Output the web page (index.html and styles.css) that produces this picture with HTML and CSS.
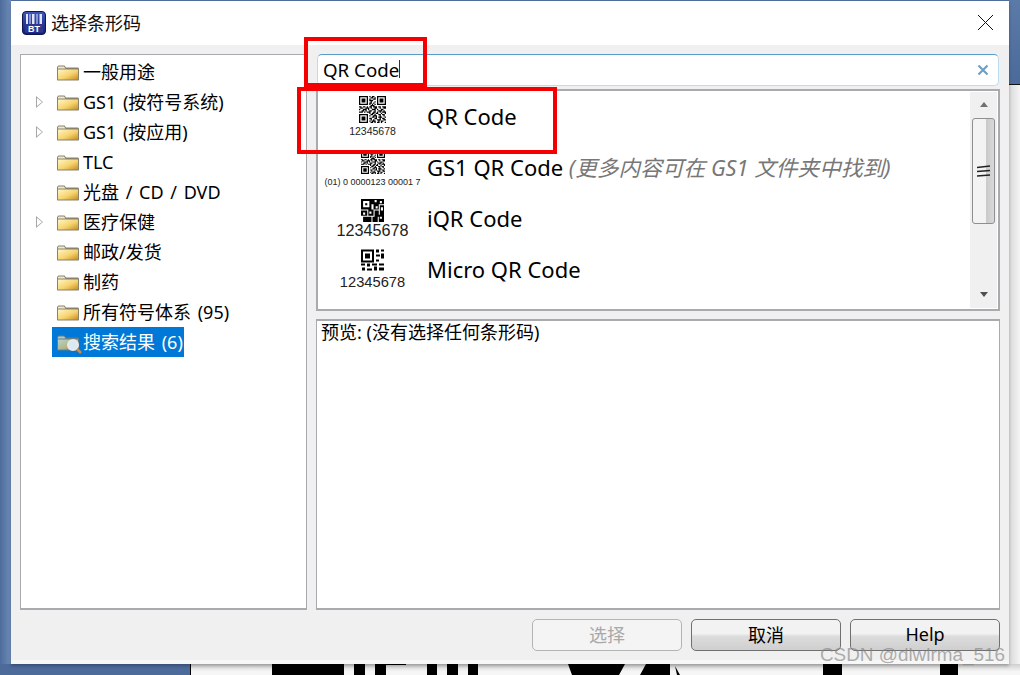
FILE: index.html
```html
<!DOCTYPE html>
<html lang="zh-CN">
<head>
<meta charset="utf-8">
<title>选择条形码</title>
<link rel="stylesheet" href="styles.css">
</head>
<body>
<svg class="defs" width="0" height="0" aria-hidden="true">
  <defs>
    <symbol id="qr" viewBox="0 0 21 21">
      <path fill="none" stroke="#000" d="M.5.5h6v6h-6zM14.5.5h6v6h-6zM.5 14.5h6v6h-6z"/>
      <path d="M2 2h3v3H2zM16 2h3v3h-3zM2 16h3v3H2z"/>
      <path fill="none" stroke="#000" d="M8 .5h1M10 .5h2M9 1.5h2M12 1.5h1M8 2.5h1M11 2.5h2M8 3.5h3M9 4.5h1M12 4.5h1M8 5.5h2M11 5.5h1M8 6.5h1M10 6.5h1M12 6.5h1M9 7.5h3M0 8.5h2M3 8.5h2M6 8.5h1M8 8.5h2M11 8.5h3M15 8.5h2M18 8.5h3M1 9.5h2M5 9.5h3M9 9.5h1M12 9.5h2M16 9.5h1M19 9.5h2M0 10.5h1M3 10.5h3M7 10.5h1M10 10.5h3M14 10.5h1M17 10.5h2M2 11.5h2M5 11.5h1M8 11.5h2M12 11.5h1M15 11.5h3M19 11.5h1M0 12.5h3M4 12.5h1M6 12.5h3M11 12.5h2M14 12.5h1M16 12.5h1M18 12.5h3M8 13.5h1M10 13.5h2M13 13.5h2M17 13.5h1M20 13.5h1M9 14.5h2M12 14.5h1M15 14.5h2M18 14.5h2M8 15.5h1M11 15.5h3M16 15.5h1M19 15.5h1M10 16.5h2M13 16.5h1M15 16.5h3M20 16.5h1M8 17.5h2M12 17.5h2M16 17.5h1M18 17.5h2M9 18.5h1M11 18.5h1M14 18.5h3M19 18.5h2M8 19.5h1M10 19.5h3M15 19.5h1M17 19.5h2M9 20.5h2M12 20.5h1M14 20.5h2M17 20.5h1M20 20.5h1"/>
    </symbol>
    <symbol id="iqr" viewBox="0 0 22 22">
      <path d="M0 0h10v10H0zM10 0h12v5H10zM12 5h5v5h-5zM18 6h4v9h-4zM0 11h6v5H0zM7 10h5v6H7zM13 11h4v6h-4zM2 17h8v5H2zM11 17h5v5h-5zM17 15h5v7h-5z"/>
      <path fill="#fff" d="M2 2h6v6H2zM13 1h2v2h-2zM18 2h2v2h-2zM19 8h2v3h-2zM2 13h2v2H2zM18 17h2v2h-2zM8 12h2v2H8zM14 7h2v2h-2z"/>
      <path d="M4 4h2v2H4z"/>
    </symbol>
    <symbol id="micro" viewBox="0 0 23 21">
      <path fill="none" stroke="#000" stroke-width="2" d="M1 1h11v11H1z"/>
      <path d="M4 4h5v5H4zM15 0h3v3h-3zM20 0h3v2h-3zM15 5h4v2h-4zM20 4h3v5h-3zM15 10h3v2h-3zM0 14h4v2H0zM6 14h3v3H6zM11 14h5v2h-5zM18 14h5v2h-5zM1 18h3v3H1zM6 19h5v2H6zM13 17h3v4h-3zM18 18h5v3h-5z"/>
    </symbol>
    <symbol id="folder" viewBox="0 0 22 16">
      <path fill="#8a826a" d="M0 2.500 1.500 1h6L9 3h12l1 1v11.500l-.5.5H.5L0 15.500z"/>
      <path fill="#efe9d2" d="M1 4V2.500L2 2h5l1.500 2z"/>
      <path fill="url(#folderFill)" d="M1 5h20v10H1z"/>
      <defs>
        <linearGradient id="folderFill" x1="0" y1="0" x2="1" y2="1">
          <stop offset="0" stop-color="#fff6c4"/>
          <stop offset=".55" stop-color="#f6d36f"/>
          <stop offset="1" stop-color="#c98f1e"/>
        </linearGradient>
      </defs>
    </symbol>
  </defs>
</svg>

<div class="backdrop">
  <div class="edge edge-left"></div>
  <div class="edge edge-right-top"></div>
  <div class="edge edge-right-low"></div>
  <div class="edge edge-bottom-left"></div>
  <div class="edge edge-bottom-right">
    <svg class="ink" width="830" height="11" viewBox="0 0 830 11">
      <path d="M0 0h1v11H0zM82 0h72v11H82zM164 0h11v11h-11zM185 0h11v11h-11zM195 0h21v1h-21zM237 0h10v11h-10zM257 0h11v11h-11zM278 0h10v11h-10zM378 0h57l-6 11h-47zM456 0h24v11h-30zM485 2l5 9h-3zM633 0h19v11h-19zM750 0h18v11h-18z"/>
    </svg>
  </div>
</div>

<main class="dialog">
  <header class="titlebar">
    <svg class="app-icon" width="24" height="24" viewBox="0 0 24 24">
      <defs>
        <linearGradient id="iconBg" x1="0" y1="0" x2="0" y2="1">
          <stop offset="0" stop-color="#3f57b8"/>
          <stop offset="1" stop-color="#141c78"/>
        </linearGradient>
      </defs>
      <rect x=".5" y=".5" width="23" height="23" rx="3.500" fill="url(#iconBg)" stroke="#0f1550"/>
      <path fill="#dfe4f7" d="M4 3h2v10H4zM7.500 3h1v10h-1zM10 3h2.500v10H10zM14.500 3h1v10h-1zM17.500 3h2.500v10h-2.500z"/>
      <rect x="3" y="13" width="18" height="8.500" fill="#2c388f"/>
      <text x="12" y="20.800" class="app-icon-text">BT</text>
    </svg>
    <span class="title">选择条形码</span>
    <svg class="close" width="17" height="17" viewBox="0 0 17 17"><path d="M1 1l15 15M16 1 1 16" stroke="#111" fill="none"/></svg>
  </header>

  <div class="body">
    <div class="panes">
      <nav class="tree">
        <div class="node"><span class="twist"></span><svg class="folder"><use href="#folder"/></svg><span class="label">一般用途</span></div>
        <div class="node"><span class="twist closed"></span><svg class="folder"><use href="#folder"/></svg><span class="label">GS1 (按符号系统)</span></div>
        <div class="node"><span class="twist closed"></span><svg class="folder"><use href="#folder"/></svg><span class="label">GS1 (按应用)</span></div>
        <div class="node"><span class="twist"></span><svg class="folder"><use href="#folder"/></svg><span class="label">TLC</span></div>
        <div class="node"><span class="twist"></span><svg class="folder"><use href="#folder"/></svg><span class="label">光盘 / CD / DVD</span></div>
        <div class="node"><span class="twist closed"></span><svg class="folder"><use href="#folder"/></svg><span class="label">医疗保健</span></div>
        <div class="node"><span class="twist"></span><svg class="folder"><use href="#folder"/></svg><span class="label">邮政/发货</span></div>
        <div class="node"><span class="twist"></span><svg class="folder"><use href="#folder"/></svg><span class="label">制药</span></div>
        <div class="node"><span class="twist"></span><svg class="folder"><use href="#folder"/></svg><span class="label">所有符号体系 (95)</span></div>
        <div class="node selected">
          <span class="twist"></span>
          <span class="search-folder">
            <svg class="folder pale"><use href="#folder"/></svg>
            <svg class="lens" width="16" height="16" viewBox="0 0 16 16"><circle cx="7" cy="7" r="5" fill="#dbe9f5" stroke="#e9e9e9" stroke-width="2"/><path d="M11 11l4 4" stroke="#d98a3a" stroke-width="2.500"/></svg>
          </span>
          <span class="label">搜索结果 (6)</span>
        </div>
      </nav>

      <section class="right">
        <div class="search">
          <span class="query">QR Code</span><span class="caret"></span>
          <svg class="clear" width="12" height="12" viewBox="0 0 12 12"><path d="M1.500 1.500l9 9M10.500 1.500l-9 9" stroke="#6f9fc8" stroke-width="2.200" fill="none"/></svg>
        </div>

        <div class="list">
          <div class="rows">
            <div class="row">
              <div class="sym"><svg class="code c1"><use href="#qr"/></svg><span class="num n1">12345678</span></div>
              <div class="name">QR Code</div>
            </div>
            <div class="row">
              <div class="sym"><svg class="code c2"><use href="#qr"/></svg><span class="num n2">(01) 0 0000123 00001 7</span></div>
              <div class="name with-hint">GS1 QR Code <em class="hint">(更多内容可在 GS1 文件夹中找到)</em></div>
            </div>
            <div class="row">
              <div class="sym"><svg class="code c3"><use href="#iqr"/></svg><span class="num n3">12345678</span></div>
              <div class="name">iQR Code</div>
            </div>
            <div class="row">
              <div class="sym"><svg class="code c4"><use href="#micro"/></svg><span class="num n4">12345678</span></div>
              <div class="name">Micro QR Code</div>
            </div>
            <div class="row">
              <div class="sym"><svg class="code c5"><use href="#qr"/></svg></div>
            </div>
          </div>
          <div class="scrollbar">
            <span class="arrow up"></span>
            <div class="track">
              <div class="thumb">
                <svg class="grip" width="14" height="13" viewBox="0 0 14 13"><path d="M0 2.500 13 1M0 6.500 13 5.500M0 11 13 10" stroke="#222" stroke-width="1.300" fill="none"/></svg>
              </div>
            </div>
            <span class="arrow down"></span>
          </div>
        </div>

        <div class="preview">预览: (没有选择任何条形码)</div>
      </section>
    </div>

    <footer class="actions">
      <button class="btn disabled" type="button">选择</button>
      <button class="btn" type="button">取消</button>
      <button class="btn" type="button">Help</button>
    </footer>
  </div>
</main>

<div class="mark mark-search"></div>
<div class="mark mark-row"></div>
<div class="watermark">CSDN @dlwlrma_516</div>
</body>
</html>
```

FILE: styles.css
```css
* { box-sizing: border-box; }

html, body {
  margin: 0;
  height: 675px;
  overflow: hidden;
}

body {
  position: relative;
  width: 1020px;
  padding: 1px 11px 0;
  background: #4f6f9f;
  font-family: "Noto Sans", "Noto Sans CJK SC", sans-serif;
  font-size: 18px;
  color: #000;
}

.defs { position: absolute; }

/* What shows around the dialog: a screenshot of the desktop behind it */
.edge { position: absolute; }
.edge-left {
  left: 0; top: 0;
  width: 11px; height: 675px;
  background: linear-gradient(90deg, #4c6c9c, #6f8cb8);
}
.edge-right-top {
  right: 0; top: 0;
  width: 11px; height: 84px;
  background: linear-gradient(180deg, #5c7aa8, #4a6a9a);
}
.edge-right-low {
  right: 0; top: 84px;
  width: 11px; height: 591px;
  background: linear-gradient(90deg, #d9d9d9, #f4f4f4);
  border-top: 1px solid #111;
}
.edge-bottom-left {
  left: 0; top: 664px;
  width: 190px; height: 11px;
  background: #4c6a9a;
}
.edge-bottom-right {
  left: 190px; top: 664px;
  width: 830px; height: 11px;
  background: linear-gradient(180deg, #cfcfcf, #f6f6f6 70%);
}
.ink { display: block; }

.dialog {
  position: relative;
  display: flex;
  flex-direction: column;
  width: 998px;
  height: 663px;
  background: #f0f0f0;
  box-shadow: 0 2px 3px rgba(0, 0, 0, .25);
  border-bottom: 4px solid #f7f7f7;
}

.titlebar {
  display: flex;
  align-items: center;
  height: 44px;
  padding: 0 15px 0 11px;
  background: #fff;
}
.app-icon { flex: none; margin-top: -1px; }
.app-icon-text {
  font: bold 9px "Liberation Sans", sans-serif;
  fill: #fff;
  text-anchor: middle;
}
.title {
  margin-left: 5px;
  font-size: 18px;
  line-height: 24px;
  color: #111;
}
.close { margin-left: auto; margin-top: -1px; }

.body {
  flex: 1;
  display: flex;
  flex-direction: column;
  min-height: 0;
  padding: 9px 9px 0;
}

.panes {
  display: flex;
  gap: 9px;
  height: 556px;
}

.tree {
  width: 287px;
  padding-top: 2px;
  background: #fff;
  border: 1px solid #a9a9ae;
  border-bottom: 2px solid #a9a9ae;
}
.node {
  display: flex;
  align-items: center;
  width: max-content;
  height: 30px;
  margin-left: 31px;
  white-space: nowrap;
}
.twist {
  position: relative;
  width: 24px;
  margin-left: -19px;
}
.twist.closed::before {
  content: "";
  position: absolute;
  left: 3px; top: -6px;
  width: 0; height: 0;
  border-style: solid;
  border-width: 6px 0 6px 7px;
  border-color: transparent transparent transparent #a6a6a6;
}
.twist.closed::after {
  content: "";
  position: absolute;
  left: 4px; top: -4px;
  width: 0; height: 0;
  border-style: solid;
  border-width: 4px 0 4px 5px;
  border-color: transparent transparent transparent #fff;
}
.folder {
  display: block;
  flex: none;
  width: 22px;
  height: 17px;
}
.label {
  margin-left: 4px;
  line-height: 30px;
  word-spacing: 2px;
}
.selected {
  padding-right: 1px;
  background: #0078d7;
  color: #fff;
}
.search-folder { position: relative; display: block; width: 22px; height: 17px; }
.pale { opacity: .72; }
.lens { position: absolute; right: -3px; bottom: -3px; }

.right {
  flex: 1;
  display: flex;
  flex-direction: column;
  min-width: 0;
}

.search {
  display: flex;
  align-items: center;
  height: 32px;
  margin: 0 1px 3px;
  padding: 0 9px 2px 5px;
  background: #fff;
  border: 1px solid #bcdcf0;
  border-top-color: #5b9bc9;
  border-radius: 5px;
}
.query { font-size: 18.700px; }
.caret {
  display: block;
  width: 1px;
  height: 18px;
  background: #333;
}
.clear { margin-left: auto; margin-top: 2px; }

.list {
  display: flex;
  height: 222px;
  margin-bottom: 8px;
  overflow: hidden;
  background: #fff;
  border: 2px solid #a9a9ae;
}
.rows {
  flex: 1;
  min-width: 0;
  overflow: hidden;
}
.row {
  display: flex;
  align-items: center;
  height: 51px;
}
.sym {
  flex: none;
  display: flex;
  flex-direction: column;
  align-items: center;
  width: 109px;
}
.code { display: block; }
.c1 { width: 27px; height: 27px; margin-top: 2px; }
.c2 { width: 24px; height: 24px; margin-top: 3px; }
.c3 { width: 23px; height: 23px; margin-top: -1px; }
.c4 { width: 23px; height: 22px; margin-top: 0; }
.c5 { width: 23px; height: 23px; margin-top: 3px; }
.num {
  font-family: "Liberation Sans", sans-serif;
  color: #222;
  white-space: nowrap;
}
.n1 { font-size: 10.500px; line-height: 15px; margin-top: 1px; }
.n2 { font-size: 9px; line-height: 14px; margin-top: 1px; }
.n3 { font-size: 16.200px; line-height: 16px; }
.n4 { font-size: 14.700px; line-height: 16px; margin-top: 3px; }
.name {
  margin-top: -2px;
  font-size: 22px;
  line-height: 30px;
  white-space: nowrap;
}
.with-hint { margin-top: 0; }
.hint {
  font-size: 21.700px;
  color: #777;
}

.scrollbar {
  flex: none;
  display: flex;
  flex-direction: column;
  align-items: center;
  width: 27px;
  margin: 1px;
  background: #f0f0f0;
}
.arrow { flex: none; width: 0; height: 0; border-style: solid; }
.up {
  margin-top: 10px;
  border-width: 0 4px 5px;
  border-color: transparent transparent #707070;
}
.down {
  margin-bottom: 11px;
  border-width: 5px 4px 0;
  border-color: #505050 transparent transparent;
}
.track { flex: 1; width: 100%; padding: 11px 2px 0; }
.thumb {
  display: flex;
  align-items: center;
  justify-content: center;
  height: 106px;
  background: linear-gradient(90deg, #f3f3f3 0 60%, #c9c9cb 62%, #d9d9da 100%);
  border: 1px solid #8f8f8f;
  border-radius: 3px;
}

.preview {
  flex: 1;
  min-height: 0;
  padding-left: 4px;
  font-size: 18px;
  line-height: 22px;
  background: #fff;
  border: 1px solid #a9a9ae;
  border-width: 2px 1px;
}

.actions {
  display: flex;
  justify-content: flex-end;
  gap: 9px;
  padding-top: 9px;
}
.btn {
  width: 150px;
  height: 32px;
  padding: 0 0 2px;
  font: inherit;
  font-size: 18px;
  color: #000;
  background: linear-gradient(180deg, #f2f2f2 0 45%, #dcdcdc 55%, #cfcfcf 100%);
  border: 1px solid #707070;
  border-radius: 5px;
}
.btn.disabled {
  color: #a8a8a8;
  background: #f4f4f4;
  border-color: #b4b4b4;
}

/* Red annotation boxes drawn on top of the screenshot */
.mark {
  position: absolute;
  border: 4px solid #f40000;
}
.mark-search { left: 304px; top: 37px; width: 123px; height: 50px; }
.mark-row { left: 297px; top: 87px; width: 260px; height: 67px; }

.watermark {
  position: absolute;
  right: 15px;
  top: 644px;
  font-family: "Liberation Sans", sans-serif;
  font-size: 18.900px;
  line-height: 22px;
  color: rgba(130, 130, 130, .65);
  white-space: nowrap;
}
```
